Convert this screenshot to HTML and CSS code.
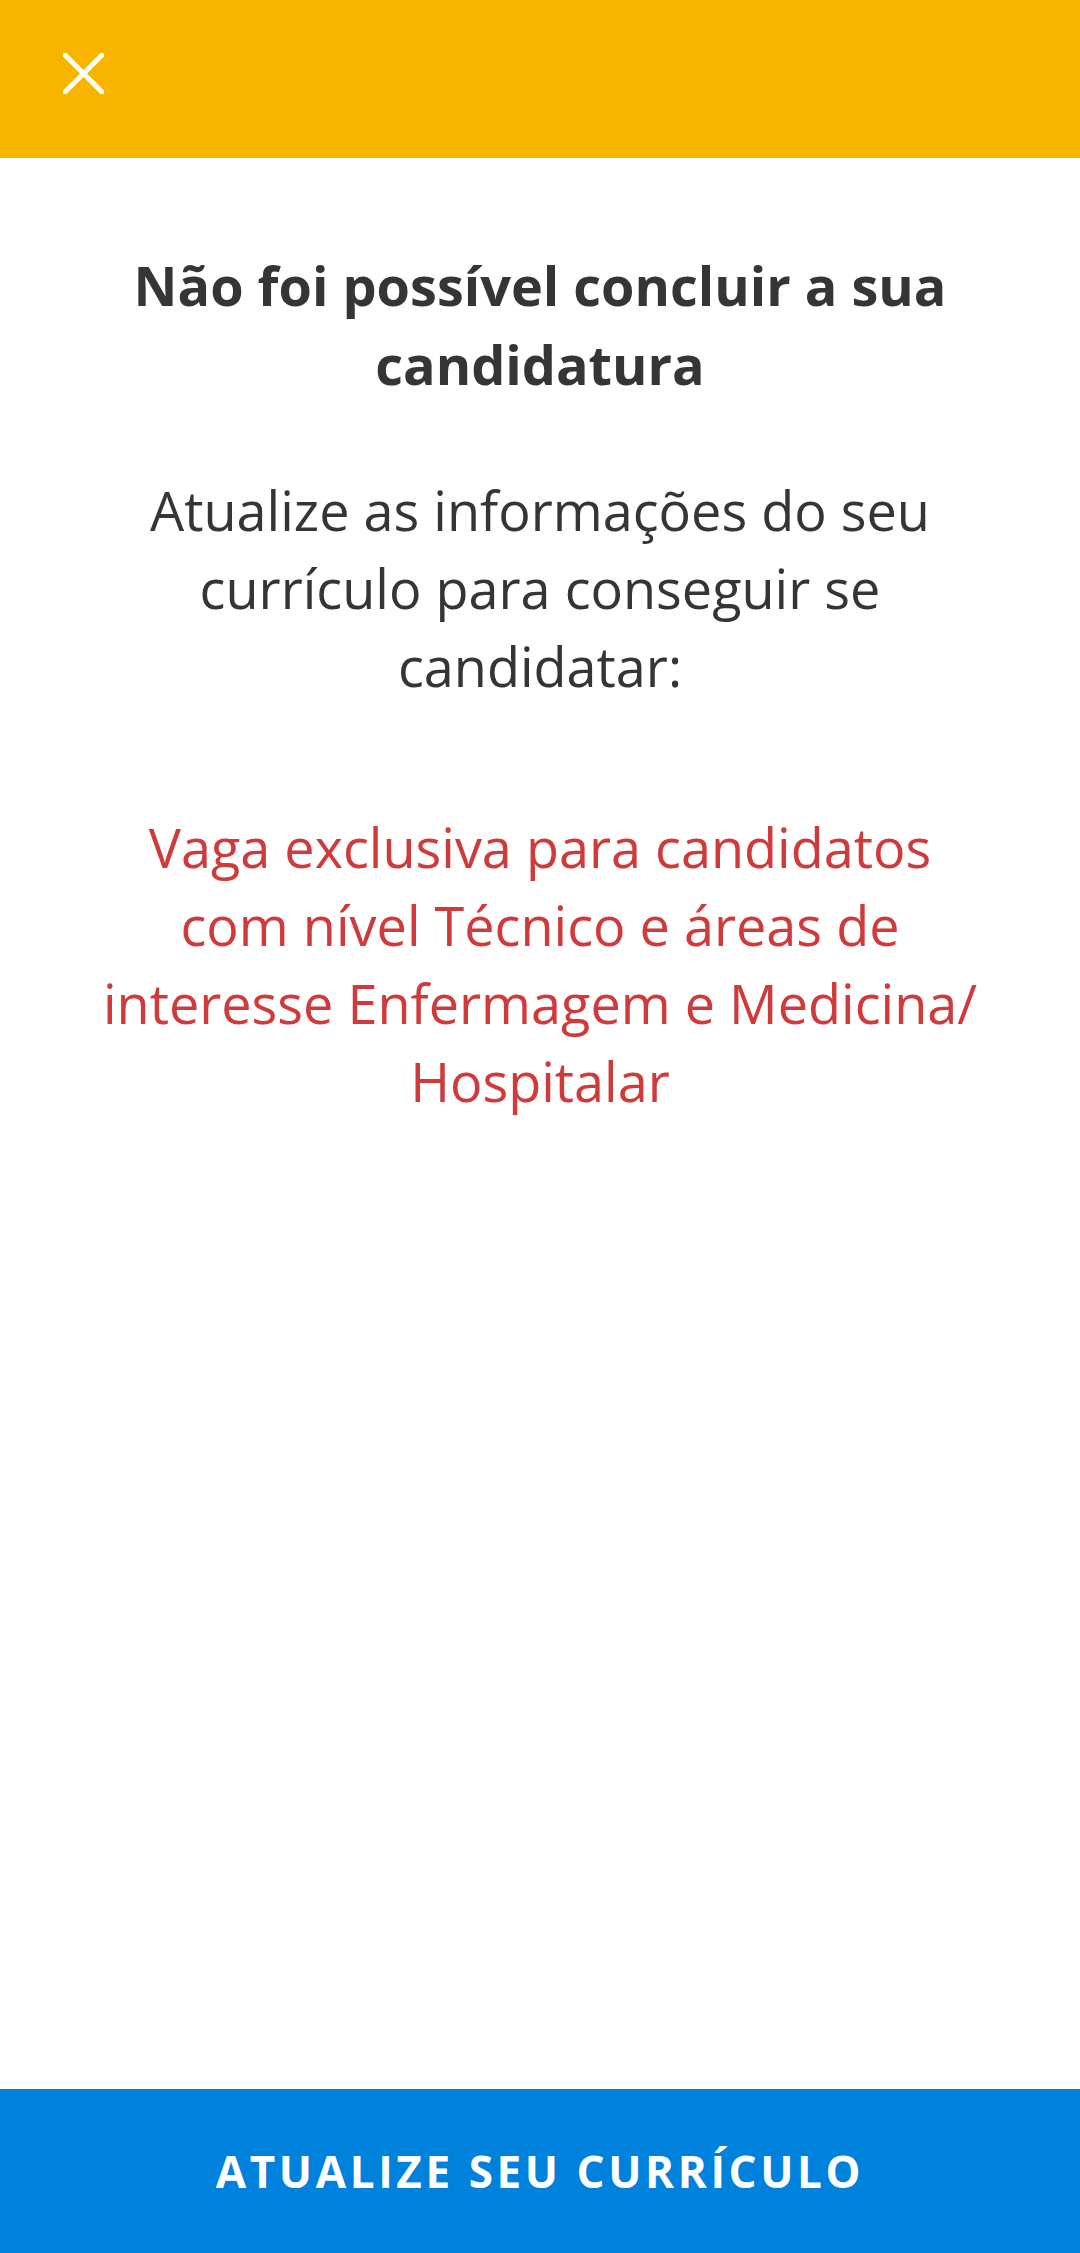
FILE: index.html
```html
<!DOCTYPE html>
<html lang="pt-BR">
<head>
    <meta charset="UTF-8" />
    <title>Candidatura</title>
    <link rel="stylesheet" href="styles.css">
</head>
<body>
    <div class="screen">
        <div class="top-bar">
            <button class="close-btn" aria-label="Fechar">
                <svg width="41" height="41" viewBox="0 0 41 41">
                    <line x1="2" y1="2" x2="39" y2="39" />
                    <line x1="39" y1="2" x2="2" y2="39" />
                </svg>
            </button>
        </div>

        <div class="content">
            <h1 class="title">Não foi possível concluir a sua candidatura</h1>

            <p class="message">Atualize as informações do seu currículo para conseguir se candidatar:</p>

            <p class="requirement">Vaga exclusiva para candidatos com nível Técnico e áreas de interesse Enfermagem e Medicina/<wbr>Hospitalar</p>
        </div>

        <button class="update-btn">Atualize seu currículo</button>
    </div>
</body>
</html>
```

FILE: styles.css
```css
body {
    margin: 0;
    font-family: "Open Sans", "Noto Sans", sans-serif;
    background-color: #ffffff;
    color: #353535;
}

.screen {
    display: flex;
    flex-direction: column;
    min-height: 100vh;
}

.top-bar {
    height: 158px;
    background-color: #f7b500;
    padding: 53px 0 0 63px;
    box-sizing: border-box;
}

.close-btn {
    display: block;
    padding: 0;
    border: none;
    background: none;
    width: 41px;
    height: 41px;
    cursor: pointer;
}

.close-btn svg {
    display: block;
}

.close-btn line {
    stroke: #ffffff;
    stroke-width: 5;
    stroke-linecap: square;
}

.content {
    flex: 1;
    padding: 88px 94px 0;
    text-align: center;
}

.title {
    margin: 0;
    font-size: 54px;
    font-weight: 700;
    line-height: 79px;
    color: #353535;
}

.message {
    margin: 67px 0 0;
    font-size: 54px;
    line-height: 78px;
}

/* requirement missing from the resume */
.requirement {
    margin: 103px 0 0;
    font-size: 54px;
    line-height: 78px;
    color: #d03a3b;
}

.update-btn {
    height: 164px;
    border: none;
    background-color: #0081dc;
    color: #ffffff;
    font-family: "Open Sans", "Noto Sans", sans-serif;
    font-size: 44px;
    font-weight: 700;
    letter-spacing: 3.6px;
    text-transform: uppercase;
    cursor: pointer;
}
```
